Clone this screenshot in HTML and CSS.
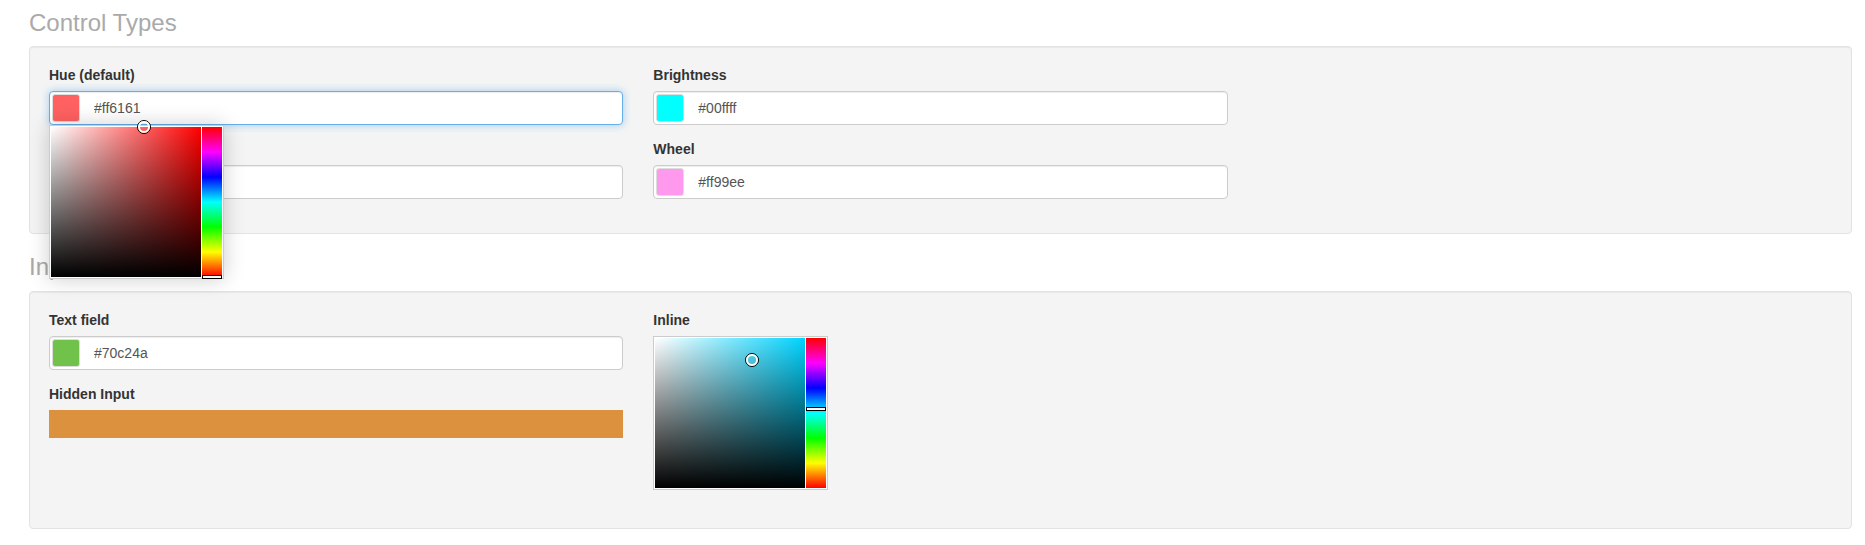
FILE: index.html
```html
<!DOCTYPE html>
<html lang="en">
<head>
    <meta charset="UTF-8">
    <meta name="viewport" content="width=device-width, initial-scale=1.0">
    <title>MiniColors</title>
    <link rel="stylesheet" href="styles.css">
</head>
<body>
    <div class="page">
        <h3 class="section-title">Control Types</h3>
        <div class="well">
            <div class="row">
                <div class="col">
                    <div class="form-group">
                        <label>Hue (default)</label>
                        <div class="minicolors">
                            <input type="text" class="form-control focus" value="#ff6161">
                            <span class="swatch" style="background-color: #ff6161"></span>
                            <!-- open dropdown panel -->
                            <div class="mc-panel popup">
                                <div class="mc-grid" style="background-color: hsl(0, 100%, 50%)">
                                    <div class="mc-dot" style="left: 93px; top: 0px"><div></div></div>
                                </div>
                                <div class="mc-slider">
                                    <div class="mc-handle" style="top: 150px"></div>
                                </div>
                            </div>
                        </div>
                    </div>
                    <div class="form-group">
                        <label>Saturation</label>
                        <div class="minicolors">
                            <input type="text" class="form-control" value="#0088cc">
                            <span class="swatch" style="background-color: #0088cc"></span>
                        </div>
                    </div>
                </div>
                <div class="col">
                    <div class="form-group">
                        <label>Brightness</label>
                        <div class="minicolors">
                            <input type="text" class="form-control" value="#00ffff">
                            <span class="swatch" style="background-color: #00ffff"></span>
                        </div>
                    </div>
                    <div class="form-group">
                        <label>Wheel</label>
                        <div class="minicolors">
                            <input type="text" class="form-control" value="#ff99ee">
                            <span class="swatch" style="background-color: #ff99ee"></span>
                        </div>
                    </div>
                </div>
                <div class="col"></div>
            </div>
        </div>

        <h3 class="section-title">Input Modes</h3>
        <div class="well">
            <div class="row">
                <div class="col">
                    <div class="form-group">
                        <label>Text field</label>
                        <div class="minicolors">
                            <input type="text" class="form-control" value="#70c24a">
                            <span class="swatch" style="background-color: #70c24a"></span>
                        </div>
                    </div>
                    <div class="form-group">
                        <label>Hidden Input</label>
                        <div class="hidden-swatch" style="background-color: #db913d"></div>
                    </div>
                </div>
                <div class="col">
                    <div class="form-group">
                        <label>Inline</label>
                        <div class="mc-panel inline">
                            <div class="mc-grid" style="background-color: hsl(190, 100%, 50%)">
                                <div class="mc-dot" style="left: 97px; top: 22px"><div></div></div>
                            </div>
                            <div class="mc-slider">
                                <div class="mc-handle" style="top: 71px"></div>
                            </div>
                        </div>
                    </div>
                </div>
                <div class="col"></div>
            </div>
        </div>
    </div>
</body>
</html>
```

FILE: styles.css
```css
* {
    box-sizing: border-box;
}
body {
    margin: 0;
    font-family: 'Liberation Sans', Arial, sans-serif;
    font-size: 14px;
    line-height: 1.42857;
    color: #333;
    background: #fff;
}
.page {
    padding: 10px 13px 0 29px;
}
.section-title {
    margin: 0 0 10px;
    font-size: 24px;
    font-weight: normal;
    line-height: 1.1;
    color: #aaa;
}
.well {
    background-color: #f4f4f4;
    border: 1px solid #e3e3e3;
    border-radius: 4px;
    box-shadow: inset 0 1px 1px rgba(0,0,0,0.05);
    padding: 19px;
    margin-bottom: 20px;
}
.row {
    display: grid;
    grid-template-columns: repeat(3, 1fr);
    column-gap: 30px;
}
.form-group {
    margin-bottom: 15px;
}
label {
    display: block;
    margin-bottom: 5px;
    font-weight: bold;
}
.form-control {
    display: block;
    width: 100%;
    height: 34px;
    padding: 6px 12px 6px 44px;
    font-family: inherit;
    font-size: 14px;
    line-height: 1.42857;
    color: #555;
    background-color: #fff;
    border: 1px solid #ccc;
    border-radius: 4px;
    box-shadow: inset 0 1px 1px rgba(0,0,0,0.075);
    outline: none;
}
.form-control.focus {
    border-color: #66afe9;
    box-shadow: inset 0 1px 1px rgba(0,0,0,0.075), 0 0 8px rgba(102,175,233,0.6);
}

/* color picker */
.minicolors {
    position: relative;
}
.swatch {
    position: absolute;
    top: 3px;
    left: 3px;
    width: 28px;
    height: 28px;
    border: 1px solid #ddd;
    border-radius: 3px;
}
.hidden-swatch {
    height: 28px;
}
.mc-panel {
    position: relative;
    width: 175px;
    height: 154px;
    background: #fff;
    border: 1px solid #ccc;
}
.mc-panel.popup {
    position: absolute;
    top: 34px;
    left: 0;
    z-index: 10;
    box-shadow: 0 0 20px rgba(0,0,0,0.2);
}
.mc-panel.inline {
    margin-bottom: 19px;
}
.mc-grid {
    position: absolute;
    top: 1px;
    left: 1px;
    width: 150px;
    height: 150px;
    background-image: linear-gradient(to bottom, rgba(0,0,0,0), #000),
                      linear-gradient(to right, #fff, rgba(255,255,255,0));
}
.mc-dot {
    position: absolute;
    width: 14px;
    height: 14px;
    margin: -7px 0 0 -7px;
    border: 1px solid #000;
    border-radius: 10px;
}
.mc-dot div {
    width: 12px;
    height: 12px;
    border: 2px solid #fff;
    border-radius: 8px;
}
.mc-slider {
    position: absolute;
    top: 1px;
    left: 152px;
    width: 20px;
    height: 150px;
    background: linear-gradient(to bottom, #f00 0%, #f0f 16.67%, #00f 33.33%, #0ff 50%, #0f0 66.67%, #ff0 83.33%, #f00 100%);
}
.mc-handle {
    position: absolute;
    left: 0;
    width: 20px;
    height: 4px;
    margin-top: -2px;
    background: #fff;
    border: 1px solid #000;
}
```
